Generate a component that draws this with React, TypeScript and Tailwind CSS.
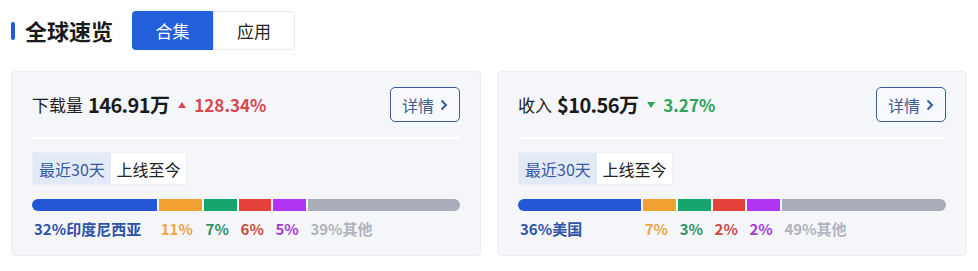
import React from "react";

type Seg = { w: number; color: string; text: string; label: string };

const card1: Seg[] = [
  { w: 125, color: "#2457d6", text: "#2d52a8", label: "32%印度尼西亚" },
  { w: 43, color: "#f1a131", text: "#f0a545", label: "11%" },
  { w: 33, color: "#17a56e", text: "#2e9165", label: "7%" },
  { w: 33, color: "#e5433a", text: "#cc4a40", label: "6%" },
  { w: 33, color: "#b135f3", text: "#a53ed3", label: "5%" },
  { w: 152, color: "#aaadb9", text: "#b1b4bd", label: "39%其他" },
];

const card2: Seg[] = [
  { w: 123, color: "#2457d6", text: "#2d52a8", label: "36%美国" },
  { w: 33, color: "#f1a131", text: "#f0a545", label: "7%" },
  { w: 33, color: "#17a56e", text: "#2e9165", label: "3%" },
  { w: 33, color: "#e5433a", text: "#cc4a40", label: "2%" },
  { w: 33, color: "#b135f3", text: "#a53ed3", label: "2%" },
  { w: 164, color: "#aaadb9", text: "#b1b4bd", label: "49%其他" },
];

function Card({
  name,
  value,
  up,
  change,
  segs,
}: {
  name: string;
  value: string;
  up: boolean;
  change: string;
  segs: Seg[];
}) {
  return (
    <div className="h-[185px] rounded-[4px] border border-[#e9ecf1] bg-[#f4f6fa] px-[20px] pt-[15px]">
      <div className="flex h-[35px] items-center justify-between">
        <div className="flex items-center">
          <span className="text-[17px] text-[#222]">{name}</span>
          <span className="ml-[5px] text-[20px] font-bold tracking-[-0.6px] text-[#1a1a1a]">{value}</span>
          <svg width="8" height="6" viewBox="0 0 8 6" className="ml-[9px] mr-[8px]">
            {up ? (
              <polygon points="4,0 8,6 0,6" fill="#d9474f" />
            ) : (
              <polygon points="0,0 8,0 4,6" fill="#2fa35a" />
            )}
          </svg>
          <span className={"text-[17px] font-semibold " + (up ? "text-[#d9474f]" : "text-[#2fa35a]")}>
            {change}
          </span>
        </div>
        <button className="flex h-[35px] w-[70px] items-center justify-center gap-[6px] rounded-[5px] border border-[#3d5b96] bg-[#f8f9fc] text-[16px] text-[#3d5b96]">
          <span>详情</span>
          <svg width="8" height="12" viewBox="0 0 8 12">
            <path d="M1.5 1.5 L6 6 L1.5 10.5" stroke="#3d5b96" strokeWidth="2" fill="none" />
          </svg>
        </button>
      </div>
      <div className="mt-[15px] h-[2px] bg-white" />
      <div className="mt-[13px] flex h-[33px] w-[155px] border border-[#eceff4] bg-white text-[16px]">
        <div className="flex w-[78px] items-center justify-center bg-[#e2e9f7] text-[#3c5aa0]">最近30天</div>
        <div className="flex flex-1 items-center justify-center text-[#222]">上线至今</div>
      </div>
      <div className="mt-[14px] flex h-[12px] gap-[2px]">
        {segs.map((s, i) => (
          <div
            key={i}
            className={
              "h-full " +
              (i === 0 ? "rounded-l-full" : "") +
              (i === segs.length - 1 ? "rounded-r-full" : "")
            }
            style={{ width: s.w, backgroundColor: s.color }}
          />
        ))}
      </div>
      <div className="mt-[7px] flex gap-[2px]">
        {segs.map((s, i) => (
          <div
            key={i}
            className="whitespace-nowrap pl-[2px] text-[15px] font-bold leading-[22px]"
            style={{ width: s.w, color: s.text }}
          >
            {s.label}
          </div>
        ))}
      </div>
    </div>
  );
}

export default function App() {
  return (
    <div
      className="h-[271px] w-[978px] bg-white px-[11px] pt-[11px]"
      style={{ fontFamily: '"Noto Sans CJK SC", "Noto Sans", sans-serif' }}
    >
      <div className="flex h-[39px] items-center">
        <div className="h-[18px] w-[4px] rounded-full bg-[#2458d6]" />
        <div className="ml-[10px] text-[22px] font-bold text-[#1a1a1a]">全球速览</div>
        <div className="ml-[19px] flex h-[39px] text-[17px]">
          <div className="flex w-[81px] items-center justify-center rounded-l-[4px] bg-[#2360dc] text-white">合集</div>
          <div className="flex w-[82px] items-center justify-center rounded-r-[4px] border border-[#e8eaee] text-[#222]">应用</div>
        </div>
      </div>
      <div className="mt-[21px] grid grid-cols-2 gap-[16px]">
        <Card name="下载量" value="146.91万" up change="128.34%" segs={card1} />
        <Card name="收入" value="$10.56万" up={false} change="3.27%" segs={card2} />
      </div>
    </div>
  );
}
